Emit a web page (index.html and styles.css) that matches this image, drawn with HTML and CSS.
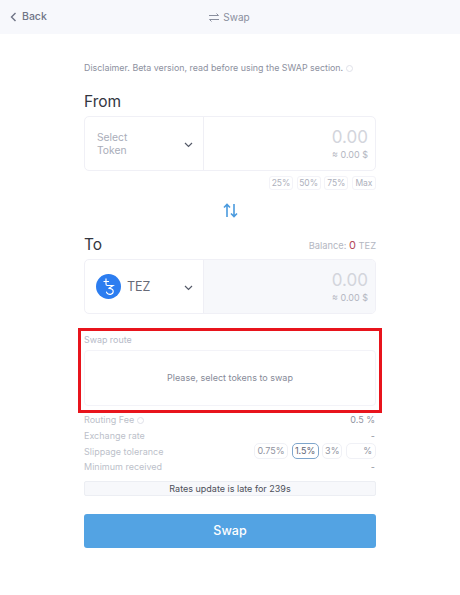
FILE: index.html
```html
<!DOCTYPE html>
<html lang="en">
<head>
<meta charset="UTF-8">
<meta name="viewport" content="width=device-width, initial-scale=1.0">
<title>Swap</title>
<link rel="stylesheet" href="styles.css">
</head>
<body>
<header class="topbar">
<a class="back">
<svg width="8" height="12" viewBox="0 0 8 12"><path d="M5.5 2 L1.5 6 L5.5 10" fill="none" stroke="#6f7486" stroke-width="1.4"/></svg>
Back
</a>
<div class="topbar-title">
<svg width="10" height="9" viewBox="0 0 10 9"><path d="M0 2.5H9.5M7.5 .5L9.5 2.5M10 6.5H.5M2.5 8.5L.5 6.5" fill="none" stroke="#8a8f9e" stroke-width="1"/></svg>
Swap
</div>
</header>

<main class="container">
<p class="disclaimer">Disclaimer. Beta version, read before using the SWAP section. <span class="info-dot"></span></p>

<h2 class="section-title from-title">From</h2>
<div class="token-box">
<div class="token-select">
<span class="select-text">Select<br>Token</span>
<svg class="chevron" width="9" height="6" viewBox="0 0 9 6"><path d="M1 1 L4.5 4.5 L8 1" fill="none" stroke="#555a68" stroke-width="1.2"/></svg>
</div>
<div class="token-amount">
<div class="amount">0.00</div>
<div class="amount-usd">≈ 0.00 $</div>
</div>
</div>
<div class="percent-row">
<span class="chip">25%</span>
<span class="chip">50%</span>
<span class="chip">75%</span>
<span class="chip">Max</span>
</div>

<div class="switch">
<svg width="15" height="15" viewBox="0 0 15 15"><path d="M4 14V1.5M1 4.5L4 1.5L7 4.5M11 1V13.5M8 10.5L11 13.5L14 10.5" fill="none" stroke="#4a9ade" stroke-width="1.6"/></svg>
</div>

<div class="to-head">
<h2 class="section-title">To</h2>
<span class="balance">Balance: <b>0</b> TEZ</span>
</div>
<div class="token-box">
<div class="token-select">
<span class="tez-icon">
<svg width="25" height="25" viewBox="0 0 25 25"><circle cx="12.5" cy="12.5" r="12.5" fill="#2c7df0"/><path d="M7.5 7.5H13M10 4.5V10C10 11 10.5 11.5 11.5 11.5H17L12.5 14.5C15.5 14.2 17.5 15.8 17.2 17.8C16.9 20 14 21 11.8 19.8C10.8 19.2 10.4 18.4 10.5 17.6" fill="none" stroke="#fff" stroke-width="1.2"/></svg>
</span>
<span class="token-name">TEZ</span>
<svg class="chevron" width="9" height="6" viewBox="0 0 9 6"><path d="M1 1 L4.5 4.5 L8 1" fill="none" stroke="#555a68" stroke-width="1.2"/></svg>
</div>
<div class="token-amount readonly">
<div class="amount">0.00</div>
<div class="amount-usd">≈ 0.00 $</div>
</div>
</div>

<section class="route">
<div class="route-label">Swap route</div>
<div class="route-box">Please, select tokens to swap</div>
</section>

<div class="info-rows">
<div class="info-row"><span>Routing Fee <span class="info-dot"></span></span><span class="value">0.5 %</span></div>
<div class="info-row"><span>Exchange rate</span><span class="value">-</span></div>
<div class="info-row">
<span>Slippage tolerance</span>
<div class="slippage">
<span class="slip slip-wide">0.75%</span>
<span class="slip slip-mid active">1.5%</span>
<span class="slip slip-small">3%</span>
<span class="slip slip-custom">%</span>
</div>
</div>
<div class="info-row"><span>Minimum received</span><span class="value">-</span></div>
</div>

<div class="rates">Rates update is late for 239s</div>
<button class="swap-btn" type="button">Swap</button>
</main>
</body>
</html>
```

FILE: styles.css
```css
html, body {
  margin: 0;
  padding: 0;
}
body {
  font-family: Inter, "Liberation Sans", sans-serif;
  background-color: #fff;
  width: 460px;
  height: 595px;
  overflow: hidden;
}
.topbar {
  height: 34px;
  background-color: #f7f8fc;
  position: relative;
  display: flex;
  align-items: center;
  justify-content: center;
}
.back {
  position: absolute;
  left: 10px;
  top: 10px;
  display: flex;
  align-items: center;
  gap: 4px;
  font-size: 10.5px;
  font-weight: 500;
  color: #6f7486;
}
.topbar-title {
  display: flex;
  align-items: center;
  gap: 4px;
  font-size: 10px;
  color: #8a8f9e;
  margin-right: 1px;
}
.container {
  width: 292px;
  margin-left: 84px;
}
.disclaimer {
  margin: 28px 0 0;
  height: 12px;
  line-height: 12px;
  font-size: 8.9px;
  color: #8d91a0;
  white-space: nowrap;
}
.info-dot {
  display: inline-block;
  width: 5px;
  height: 5px;
  border: 1px solid #dfe1e9;
  border-radius: 50%;
  vertical-align: -1px;
}
.section-title {
  margin: 0;
  font-size: 15.5px;
  font-weight: 400;
  line-height: 18px;
  color: #33363f;
}
.from-title {
  margin-top: 19px;
}
.token-box {
  display: flex;
  height: 55px;
  margin-top: 5px;
  border: 1px solid #f0f0f6;
  border-radius: 5px;
  overflow: hidden;
  box-sizing: border-box;
}
.token-select {
  width: 119px;
  display: flex;
  align-items: center;
  padding: 0 12px;
  box-sizing: border-box;
  border-right: 1px solid #efeff5;
  position: relative;
}
.select-text {
  font-size: 10.3px;
  line-height: 13px;
  color: #a9adb9;
}
.chevron {
  position: absolute;
  right: 10px;
  top: 25px;
}
.tez-icon {
  display: flex;
  margin: 0 6px 0 -1px;
}
.token-name {
  font-size: 12.5px;
  color: #666a77;
}
.token-amount {
  flex: 1;
  text-align: right;
  padding: 10px 7px 0 0;
}
.token-amount.readonly {
  background-color: #f7f8fb;
}
.amount {
  font-size: 17px;
  line-height: 20px;
  color: #d3d5dc;
}
.amount-usd {
  font-size: 9px;
  line-height: 12px;
  margin-top: 2px;
  color: #b3b6c1;
}
.percent-row {
  display: flex;
  justify-content: space-between;
  width: 107px;
  margin: 5px 0 0 auto;
}
.chip {
  width: 22px;
  height: 12px;
  line-height: 12px;
  text-align: center;
  font-size: 8.5px;
  color: #adb0bc;
  border: 1px solid #f3f3f8;
  border-radius: 3px;
}
.switch {
  display: flex;
  justify-content: center;
  margin-top: 13px;
  height: 15px;
}
.to-head {
  display: flex;
  justify-content: space-between;
  align-items: center;
  margin-top: 18px;
}
.to-head + .token-box {
  margin-top: 5px;
}
.balance {
  font-size: 9.3px;
  color: #b4b7c2;
}
.balance b {
  font-size: 11px;
  font-weight: 400;
  color: #b3485a;
}
.route {
  margin: 14px -6px 0;
  border: 3px solid #e8141c;
  padding: 3px 3px 4px;
}
.route-label {
  font-size: 8.9px;
  line-height: 12px;
  color: #b6bac8;
}
.route-box {
  margin-top: 4px;
  height: 56px;
  line-height: 54px;
  box-sizing: border-box;
  border: 1px solid #f3f3f8;
  border-radius: 4px;
  text-align: center;
  font-size: 9px;
  color: #868a98;
}
.info-rows {
  margin-top: -1px;
}
.info-row {
  display: flex;
  justify-content: space-between;
  align-items: center;
  height: 15.7px;
  font-size: 9px;
  color: #bcbfca;
}
.info-row .value {
  color: #8f93a0;
  padding-right: 1px;
}
.slippage {
  display: flex;
  justify-content: space-between;
  width: 122px;
}
.slip {
  height: 14px;
  line-height: 14px;
  text-align: center;
  font-size: 9px;
  color: #8f93a0;
  border: 1px solid #f0f1f6;
  border-radius: 5px;
}
.slip-wide {
  width: 32px;
}
.slip-mid {
  width: 25px;
}
.slip-small {
  width: 18px;
}
.slip-custom {
  width: 25px;
  padding-right: 3px;
  text-align: right;
}
.slip.active {
  border-color: #7fa6cc;
  color: #5f6473;
}
.rates {
  margin-top: 6px;
  height: 15px;
  line-height: 14px;
  box-sizing: border-box;
  border: 1px solid #eceef3;
  border-radius: 2px;
  background-color: #f7f8fb;
  text-align: center;
  font-size: 9px;
  color: #4c4f5a;
}
.swap-btn {
  display: block;
  width: 292px;
  height: 34px;
  margin-top: 18px;
  border: none;
  border-radius: 3px;
  background-color: #53a3e3;
  color: #fff;
  font-family: inherit;
  font-size: 12.5px;
  font-weight: 500;
}
```
